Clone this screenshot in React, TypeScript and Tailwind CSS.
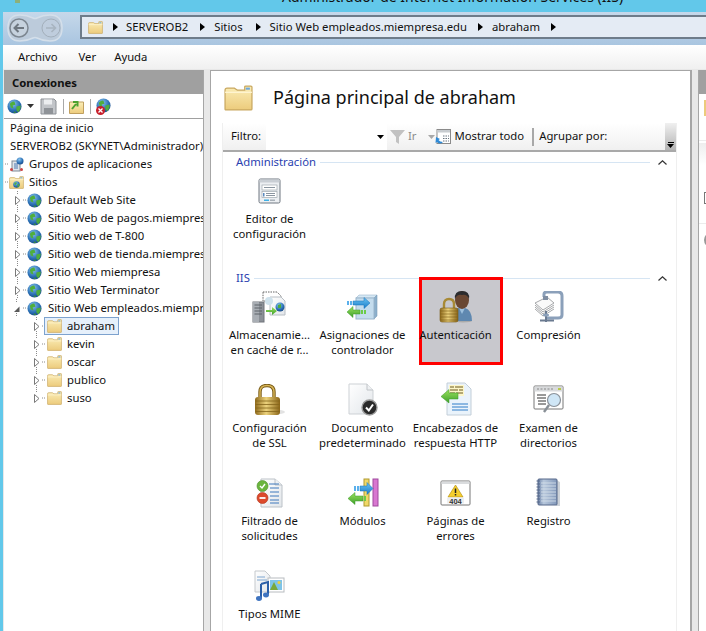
import type { ReactNode } from 'react';

const sites = [
  'Default Web Site',
  'Sitio Web de pagos.miempresa.edu',
  'Sitio web de T-800',
  'Sitio web de tienda.miempresa.edu',
  'Sitio Web miempresa',
  'Sitio Web Terminator',
];

const folders = ['abraham', 'kevin', 'oscar', 'publico', 'suso'];

function SharedDefs() {
  return (
    <svg className="absolute w-0 h-0">
      <defs>
        <linearGradient id="folderFill" x1="0" y1="0" x2="0" y2="1">
          <stop offset="0" stopColor="#fbeeb8" />
          <stop offset="1" stopColor="#eccb7c" />
        </linearGradient>
        <radialGradient id="globeFill" cx="0.4" cy="0.3" r="0.8">
          <stop offset="0" stopColor="#8ac4ee" />
          <stop offset="0.6" stopColor="#2a6fb4" />
          <stop offset="1" stopColor="#143f7c" />
        </radialGradient>
        <linearGradient id="goldFill" x1="0" y1="0" x2="1" y2="0">
          <stop offset="0" stopColor="#8f6a1c" />
          <stop offset="0.45" stopColor="#ecd27c" />
          <stop offset="1" stopColor="#8a6518" />
        </linearGradient>
        <linearGradient id="paperFill" x1="0" y1="0" x2="1" y2="1">
          <stop offset="0" stopColor="#ffffff" />
          <stop offset="1" stopColor="#e2e6ea" />
        </linearGradient>
        <linearGradient id="blueArrow" x1="0" y1="0" x2="0" y2="1">
          <stop offset="0" stopColor="#6ac4f4" />
          <stop offset="1" stopColor="#1c7cc8" />
        </linearGradient>
        <linearGradient id="greenArrow" x1="0" y1="0" x2="0" y2="1">
          <stop offset="0" stopColor="#9be25e" />
          <stop offset="1" stopColor="#3fa02c" />
        </linearGradient>
        <linearGradient id="notebook" x1="0" y1="0" x2="1" y2="0">
          <stop offset="0" stopColor="#6d83a8" />
          <stop offset="0.3" stopColor="#b8c8dc" />
          <stop offset="1" stopColor="#8298ba" />
        </linearGradient>
      </defs>
    </svg>
  );
}

function Folder({ w = 15, h = 14 }: { w?: number; h?: number }) {
  return (
    <svg width={w} height={h} viewBox="0 0 28 25" className="shrink-0" preserveAspectRatio="none">
      <path d="M1 5 Q1 3 3 3 L10 3 L13 5 L20 5 L20 2 Q20 1 21 1 L26 1 Q27 1 27 2 L27 23 Q27 24 26 24 L2 24 Q1 24 1 23 Z" fill="url(#folderFill)" stroke="#c9a860" strokeWidth="1.2" />
      <rect x="21" y="2.5" width="4" height="2" fill="#6da8dc" />
      <path d="M1 7 L27 7" stroke="#fff6d4" strokeWidth="1.2" />
    </svg>
  );
}

function Globe({ size = 15 }: { size?: number }) {
  return (
    <svg width={size} height={size} viewBox="0 0 16 16" className="shrink-0">
      <circle cx="8" cy="8" r="7.5" fill="url(#globeFill)" />
      <path d="M3 5 Q6 2 8 3 L9 6 L6 7 L7 10 L4 9 Z" fill="#4fae3c" />
      <path d="M10 8 L14.5 7 Q15 11 12 14 L10 12 Z" fill="#4fae3c" />
      <path d="M8 13 L10 14.5 L7 15 Z" fill="#3c962f" />
    </svg>
  );
}

function Arrow({ color = '#000' }: { color?: string }) {
  return (
    <svg width="5" height="8" viewBox="0 0 5 8" className="shrink-0">
      <path d="M0 0 L5 4 L0 8 Z" fill={color} />
    </svg>
  );
}

function DownCaret({ color = '#000' }: { color?: string }) {
  return (
    <svg width="7" height="4" viewBox="0 0 7 4" className="shrink-0">
      <path d="M0 0 L7 0 L3.5 4 Z" fill={color} />
    </svg>
  );
}

function Expander({ open = false, last = false }: { open?: boolean; last?: boolean }) {
  return (
    <svg width="6" height="18" viewBox="0 0 6 18" className="shrink-0">
      <path d="M2.5 0 V4" stroke="#8a8a8a" strokeDasharray="1 1" />
      {!last && <path d="M2.5 14 V18" stroke="#8a8a8a" strokeDasharray="1 1" />}
      {open ? (
        <path d="M0 13 L5.5 13 L5.5 7.5 Z" fill="#595959" />
      ) : (
        <path d="M0.5 5.5 L5 9.5 L0.5 13.5 Z" fill="#fff" stroke="#7a7a7a" />
      )}
    </svg>
  );
}

function Dots({ w }: { w: number }) {
  return (
    <svg width={w} height="2" className="shrink-0">
      <path d={`M0 1 H${w}`} stroke="#8a8a8a" strokeDasharray="1 1" />
    </svg>
  );
}

function BackButtons() {
  return (
    <svg width="56" height="28" viewBox="0 0 56 28" className="ml-[4px] -mt-[2px] shrink-0">
      <path d="M13 1 Q20 1 26 4 Q28 5 30 4 Q36 1 43 1 Q55 1 55 14 Q55 27 43 27 Q36 27 30 24 Q28 23 26 24 Q20 27 13 27 Q1 27 1 14 Q1 1 13 1 Z" fill="#bccbdb" stroke="#d4dfea" strokeWidth="1.5" />
      <circle cx="12" cy="14" r="9" fill="#c6d2de" stroke="#7d8791" strokeWidth="1.5" />
      <path d="M17 14 H8 M11.5 10 L7.5 14 L11.5 18" fill="none" stroke="#6e7780" strokeWidth="2" />
      <circle cx="44" cy="14" r="9" fill="#c0ceddb0" stroke="#a3afbb" strokeWidth="1" />
      <path d="M39 14 H48 M44.5 10 L48.5 14 L44.5 18" fill="none" stroke="#a8b4c0" strokeWidth="1.6" />
    </svg>
  );
}

function SmallIconToolbar() {
  return (
    <div className="h-[25px] shrink-0 flex items-center pl-[3px] border-b border-[#a0a0a0]">
      <Globe size={15} />
      <span className="ml-[5px] mr-[6px]"><DownCaret color="#333" /></span>
      <svg width="17" height="17" viewBox="0 0 17 17">
        <path d="M1 1 H14 L16 3 V16 H1 Z" fill="#c2c5c9" stroke="#8d9196" />
        <rect x="4" y="1.5" width="8" height="5" fill="#eceef0" />
        <rect x="4" y="10" width="9" height="6" fill="#8f9398" />
      </svg>
      <div className="w-px h-[15px] bg-[#a8a8a8] ml-[6px] mr-[5px]" />
      <svg width="15" height="15" viewBox="0 0 15 15">
        <path d="M0.5 3 H14.5 V14.5 H0.5 Z" fill="url(#folderFill)" stroke="#c0a060" />
        <path d="M3 10 L7 5 M4 3 H8.5 V7.5" fill="none" stroke="#4da22f" strokeWidth="2" />
      </svg>
      <div className="w-px h-[15px] bg-[#a8a8a8] ml-[6px] mr-[5px]" />
      <div className="relative w-[16px] h-[16px]">
        <Globe size={15} />
        <svg width="9" height="9" viewBox="0 0 9 9" className="absolute left-0 bottom-[-1px]">
          <circle cx="4.5" cy="4.5" r="4.5" fill="#c8202c" />
          <path d="M2.5 2.5 L6.5 6.5 M6.5 2.5 L2.5 6.5" stroke="#fff" strokeWidth="1.3" />
        </svg>
      </div>
    </div>
  );
}

function TreeRow({ children }: { children: ReactNode }) {
  return <div className="h-[18px] flex items-center whitespace-nowrap [&>*]:shrink-0">{children}</div>;
}

function Tree() {
  return (
    <div className="flex-1 overflow-hidden bg-white text-[#111]">
      <TreeRow><span className="pl-[6px]">Página de inicio</span></TreeRow>
      <TreeRow><span className="pl-[6px]">SERVEROB2 (SKYNET\Administrador)</span></TreeRow>
      <TreeRow>
        <span className="w-[1px]" />
        <Dots w={4} />
        <svg width="15" height="15" viewBox="0 0 15 15">
          <rect x="3" y="4" width="8" height="10" fill="#dfe4ea" stroke="#7f8a96" />
          <path d="M5 7 H9 M5 9 H9 M5 11 H9" stroke="#4a78b0" />
          <circle cx="11" cy="4" r="3.5" fill="url(#globeFill)" />
          <circle cx="2.5" cy="12.5" r="1.5" fill="#c44" />
          <circle cx="12.5" cy="12.5" r="1.5" fill="#c44" />
        </svg>
        <span className="ml-[5px]">Grupos de aplicaciones</span>
      </TreeRow>
      <TreeRow>
        <span className="w-[1px]" />
        <Dots w={4} />
        <div className="relative">
          <Folder w={15} h={13} />
          <div className="absolute left-[4px] top-[5px]"><Globe size={7} /></div>
        </div>
        <span className="ml-[5px]">Sitios</span>
      </TreeRow>
      {sites.map((site) => (
        <TreeRow key={site}>
          <span className="w-[11px]" />
          <Expander />
          <span className="w-[2px]" />
          <Dots w={4} />
          <Globe />
          <span className="ml-[6px]">{site}</span>
        </TreeRow>
      ))}
      <TreeRow>
        <span className="w-[10px]" />
        <Expander open />
        <span className="w-[3px]" />
        <Dots w={4} />
        <Globe />
        <span className="ml-[6px]">Sitio Web empleados.miempresa.edu</span>
      </TreeRow>
      {folders.map((name, i) => (
        <TreeRow key={name}>
          <span className="w-[30px]" />
          <Expander last={i === folders.length - 1} />
          <span className="w-[2px]" />
          <Dots w={3} />
          <div className={`flex items-center h-[18px] pl-[2px] pr-[3px] gap-[5px] -ml-px border ${i === 0 ? 'border-[#7da2ce] bg-[#e6f0fb]' : 'border-transparent'}`}>
            <Folder />
            <span>{name}</span>
          </div>
        </TreeRow>
      ))}
    </div>
  );
}

function SectionHeader({ title }: { title: string }) {
  return (
    <div className="h-4 flex items-center pl-[13px] pr-[9px]">
      <span className="text-[#2a3fb0]">{title}</span>
      <div className="flex-1 h-px bg-[#d6e5f3] ml-[4px]" />
      <svg width="9" height="5" viewBox="0 0 9 5" className="ml-[8px]">
        <path d="M0.5 4.5 L4.5 0.8 L8.5 4.5" fill="none" stroke="#333" strokeWidth="1.2" />
      </svg>
    </div>
  );
}

function Tile({ label, icon, selected = false }: { label: string; icon: ReactNode; selected?: boolean }) {
  return (
    <div className="relative h-[93px] flex flex-col items-center text-center text-[#111] leading-[15px]">
      {selected && <div className="absolute left-[10px] top-[-9px] w-[84px] h-[88px] bg-[#c8c8cd] border-[3px] border-[#ff0000]" />}
      <div className="relative h-[41px] w-full shrink-0 flex items-center justify-center py-[3px]">{icon}</div>
      <div className="relative w-full whitespace-pre-line">{label}</div>
    </div>
  );
}

const EditorIcon = (
  <svg width="23" height="26" viewBox="0 0 23 26">
    <rect x="1" y="1" width="21" height="24" rx="1.5" fill="#eceff2" stroke="#6f7780" />
    <rect x="1.5" y="1.5" width="20" height="3" fill="#c9ced4" />
    <rect x="4" y="7" width="15" height="5" fill="#fff" stroke="#a0a8b0" strokeWidth="0.7" />
    <path d="M6 9.5 H17" stroke="#8a95a0" />
    <rect x="4" y="13.5" width="15" height="6" fill="#fff" stroke="#a0a8b0" strokeWidth="0.7" />
    <path d="M8 15.5 H17 M8 17.5 H17" stroke="#8a95a0" />
    <rect x="5" y="15" width="1.5" height="3.5" fill="#5a8ac0" />
    <rect x="6" y="21.5" width="5" height="1.5" fill="#3fb0e6" />
    <rect x="12" y="21.5" width="5" height="1.5" fill="#a8b0b8" />
  </svg>
);

const CacheIcon = (
  <svg width="35" height="32" viewBox="0 0 35 32">
    <path d="M11 1 H25 L29 5 V10 H11 Z" fill="#fff" stroke="#666" strokeDasharray="1.5 1" />
    <path d="M18 6 H29 L33 10 V24 H18 Z" fill="url(#paperFill)" stroke="#b8bec4" />
    <rect x="1" y="11" width="11" height="20" fill="#8b9097" stroke="#70757b" />
    <rect x="1" y="11" width="6" height="20" fill="#a9aeb4" />
    <path d="M2.5 14 H10 M2.5 17 H10 M2.5 20 H10 M2.5 23 H10" stroke="#5d6268" />
    <circle cx="28" cy="16" r="4.5" fill="url(#globeFill)" />
    <path d="M26 14 L29 13 L29 17 L26 17 Z" fill="#4fae3c" />
    <circle cx="17" cy="10" r="4" fill="#cfe2ec" />
    <path d="M14 19 H20 V16 L25 20 L20 24 V21 H14 Z" fill="url(#greenArrow)" />
  </svg>
);

const HandlerIcon = (
  <svg width="33" height="26" viewBox="0 0 33 26">
    <path d="M10 4 L13 1 H31 L28 4 Z" fill="#d6e8f4" stroke="#9bb6cc" strokeWidth="0.6" />
    <path d="M28 4 L31 1 V22 L28 25 Z" fill="#8cb0cc" stroke="#7e9fba" strokeWidth="0.6" />
    <rect x="10" y="4" width="18" height="21" fill="#c4dced" stroke="#9bb6cc" />
    <path d="M1 7 H3 V11 H1 Z M4 7 H6 V11 H4 Z" fill="#5ab0ec" />
    <path d="M7 7 H18 V3.5 L24 9 L18 14.5 V11 H7 Z" fill="url(#blueArrow)" stroke="#1770b8" strokeWidth="0.5" />
    <path d="M20 16 H18 V20 H20 Z M17 16 H15 V20 H17 Z" fill="#6ccc48" />
    <path d="M14 16 H7 V12.5 L1 18 L7 23.5 V20 H14 Z" fill="url(#greenArrow)" stroke="#3a9a28" strokeWidth="0.5" />
  </svg>
);

const AuthIcon = (
  <svg width="34" height="33" viewBox="0 0 34 33">
    <ellipse cx="24" cy="31" rx="9" ry="1.5" fill="#aaa" />
    <path d="M12 31 Q11 20 19 18 H26 Q33 20 33 31 Z" fill="#5f88b0" />
    <path d="M20 18 L23 24 L26 18 Z" fill="#9cbfdd" />
    <ellipse cx="23" cy="10" rx="7" ry="9" fill="#6a4732" />
    <path d="M16 9 Q15 1 23 1 Q31 1 30 9 Q28 4 23 5 Q18 4 16 9 Z" fill="#2c2c2e" />
    <path d="M5 19 V14 Q5 9 10 9 Q15 9 15 14 V19" fill="none" stroke="#a88a36" strokeWidth="2.4" />
    <rect x="1" y="18" width="18" height="14" rx="2" fill="url(#goldFill)" stroke="#7a5c14" strokeWidth="0.6" />
    <path d="M1.5 21 H18.5 M1.5 24 H18.5 M1.5 27 H18.5 M1.5 30 H18.5" stroke="#7a5c14" strokeWidth="0.6" />
  </svg>
);

const CompressIcon = (
  <svg width="30" height="32" viewBox="0 0 30 32">
    <path d="M1 12 L13 6 L20 12 L9 19 Z" fill="#fafafa" stroke="#a6a8aa" />
    <path d="M1 14 L9 21 L20 14 M1 16 L9 23 L20 16 M1 18 L9 25 L20 18" fill="none" stroke="#a6a8aa" />
    <path d="M10 6 V3 Q10 1 13 1 H24 Q28 1 28 5 V24 Q28 27 24 27 H13" fill="none" stroke="#8ba0ba" strokeWidth="3" />
    <rect x="9" y="5" width="5" height="4" fill="#7f8ea2" />
    <path d="M12 20 V31 M6 29.5 H20" stroke="#6a7a90" strokeWidth="2" />
    <ellipse cx="12" cy="24" rx="3" ry="1.5" fill="#8ba0ba" />
  </svg>
);

const LockIcon = (
  <svg width="32" height="32" viewBox="0 0 32 32">
    <ellipse cx="20" cy="28" rx="11" ry="2.5" fill="#e2e2e2" />
    <path d="M6 14 V8 Q6 1.5 13 1.5 Q20 1.5 20 8 V14" fill="none" stroke="#7a5c18" strokeWidth="3.4" />
    <path d="M6 14 V8 Q6 1.5 13 1.5 Q20 1.5 20 8 V14" fill="none" stroke="#d8b658" strokeWidth="1.4" />
    <rect x="1" y="13" width="25" height="18" rx="3" fill="url(#goldFill)" />
    <path d="M1.5 17 H25.5 M1.5 20.5 H25.5 M1.5 24 H25.5 M1.5 27.5 H25.5" stroke="#84641a" strokeWidth="0.8" />
  </svg>
);

const DocumentIcon = (
  <svg width="30" height="33" viewBox="0 0 30 33">
    <path d="M1 1 H19 L25 7 V31 H1 Z" fill="url(#paperFill)" stroke="#cdd1d5" />
    <path d="M19 1 V7 H25" fill="#eef0f2" stroke="#c0c4c8" />
    <circle cx="21.5" cy="24.5" r="7.5" fill="#2a2a2a" stroke="#9a9a9a" strokeWidth="1.4" />
    <path d="M18 24.5 L20.8 27.5 L25 21.5" fill="none" stroke="#fff" strokeWidth="2" />
  </svg>
);

const HeadersIcon = (
  <svg width="32" height="35" viewBox="0 0 32 35">
    <path d="M7 1 H25 L31 7 V33 H7 Z" fill="#eaf3fb" stroke="#c3ced8" />
    <rect x="9" y="3" width="15" height="11" fill="#fdf6c8" />
    <path d="M10 5 H14 M15 5 H23 M10 8 H18 M19 8 H23 M10 11 H15 M16 11 H23" stroke="#6a5a20" />
    <path d="M12 22 H28 M12 25 H28 M12 28 H28" stroke="#2e7cc8" />
    <path d="M18 11 H9 V7.5 L1 14.5 L9 21 V17 H18 Z" fill="url(#greenArrow)" stroke="#3a9a28" strokeWidth="0.5" />
  </svg>
);

const BrowseIcon = (
  <svg width="31" height="29" viewBox="0 0 31 29">
    <rect x="1" y="1" width="29" height="23" rx="1" fill="#fff" stroke="#777" />
    <rect x="1.5" y="1.5" width="28" height="5" fill="#d8dadc" />
    <path d="M4 4 H20" stroke="#888" strokeDasharray="2 1.5" />
    <rect x="25" y="3" width="3" height="2" fill="#b7c94c" />
    <path d="M4 10 H13 M4 13 H13 M5 16 H13 M5 19 H13" stroke="#333" />
    <circle cx="21" cy="15" r="6.5" fill="#cfe6f6" stroke="#8a9199" strokeWidth="1.2" />
    <path d="M16 20 L11 27" stroke="#888f96" strokeWidth="2.4" />
  </svg>
);

const FilterIcon = (
  <svg width="27" height="30" viewBox="0 0 27 30">
    <path d="M5 1 H19 L26 7 V29 H5 Z" fill="url(#paperFill)" stroke="#bcc2c8" />
    <path d="M19 1 V7 H26" fill="#eef1f4" stroke="#bcc2c8" />
    <path d="M13 6 H23 M14 10 H23 M14 14 H23 M14 18 H23 M14 22 H23 M14 25 H23" stroke="#3f78bc" />
    <circle cx="6.5" cy="8" r="5.5" fill="#6bb53e" stroke="#4b8f2a" strokeWidth="0.6" />
    <path d="M4 8 L6 10 L9 6" fill="none" stroke="#fff" strokeWidth="1.4" />
    <circle cx="6.5" cy="20" r="5.5" fill="#dc4a2c" stroke="#b03218" strokeWidth="0.6" />
    <path d="M3.5 20 H9.5" stroke="#fff" strokeWidth="1.8" />
  </svg>
);

const ModulesIcon = (
  <svg width="32" height="29" viewBox="0 0 32 29">
    <rect x="17" y="1" width="5" height="27" fill="#f0d868" stroke="#b09a30" />
    <rect x="26" y="1" width="5" height="27" fill="#d877d0" stroke="#a04a9e" />
    <path d="M7 8 H9 V13 H7 Z M10 8 H12 V13 H10 Z" fill="#5ab0ec" />
    <path d="M13 8 H20 V4.5 L26 10.5 L20 16.5 V13 H13 Z" fill="url(#blueArrow)" stroke="#1770b8" strokeWidth="0.5" />
    <path d="M16 18 H8 V14.5 L1 20.5 L8 26.5 V23 H16 Z" fill="url(#greenArrow)" stroke="#3a9a28" strokeWidth="0.5" />
    <path d="M17 18 H19 V23 H17 Z" fill="#6ccc48" />
  </svg>
);

const ErrorsIcon = (
  <svg width="31" height="26" viewBox="0 0 31 26">
    <rect x="1" y="1" width="29" height="24" rx="1" fill="#fff" stroke="#777" />
    <rect x="1.5" y="1.5" width="28" height="2.5" fill="#dadcde" />
    <path d="M15.5 5 L23 17 H8 Z" fill="#f6cf2e" stroke="#b89418" strokeWidth="0.7" />
    <path d="M15.5 8.5 V13 M15.5 14 V15.5" stroke="#222" strokeWidth="1.5" />
    <rect x="7" y="17.5" width="17" height="6" fill="#eceef0" />
    <text x="15.5" y="23.5" textAnchor="middle" fontSize="7.5" fontWeight="700" fill="#333" fontFamily="'Liberation Sans', sans-serif">404</text>
  </svg>
);

const LogIcon = (
  <svg width="25" height="31" viewBox="0 0 25 31">
    <path d="M20 3 L24 5 V29 L20 29 Z" fill="#cdd2d8" />
    <rect x="2" y="2" width="19" height="26" rx="1" fill="url(#notebook)" stroke="#56688a" />
    <path d="M5 6 H20 M5 9 H20 M5 12 H20 M5 15 H20 M5 18 H20 M5 21 H20 M5 24 H20" stroke="#dbe4ee" strokeWidth="0.8" />
    <path d="M0.5 4 H4 M0.5 7 H4 M0.5 10 H4 M0.5 13 H4 M0.5 16 H4 M0.5 19 H4 M0.5 22 H4 M0.5 25 H4" stroke="#56688a" />
  </svg>
);

const MimeIcon = (
  <svg width="31" height="32" viewBox="0 0 31 32">
    <path d="M1 1 H11 L16 6 V22 H1 Z" fill="url(#paperFill)" stroke="#c4c8cc" />
    <path d="M3 7 H11 M3 10 H13" stroke="#7fa6d0" />
    <rect x="14" y="8" width="16" height="14" fill="#fff" stroke="#b8bcc0" />
    <rect x="16" y="10" width="12" height="10" fill="#7ec4e8" />
    <path d="M16 20 L20 12 L24 20 Z" fill="#7aa83a" />
    <circle cx="25" cy="12.5" r="1.5" fill="#f0d040" />
    <path d="M7 14 L14 12 V24 M7 14 V28" fill="none" stroke="#2a5ea8" strokeWidth="2" />
    <ellipse cx="5" cy="28.5" rx="3" ry="2.4" fill="#3f74c0" />
    <ellipse cx="12" cy="25" rx="3" ry="2.4" fill="#3f74c0" />
  </svg>
);

const iisTiles: { label: string; icon: ReactNode; selected?: boolean }[] = [
  { label: 'Almacenamie...\nen caché de r...', icon: CacheIcon },
  { label: 'Asignaciones de\ncontrolador', icon: HandlerIcon },
  { label: 'Autenticación', icon: AuthIcon, selected: true },
  { label: 'Compresión', icon: CompressIcon },
  { label: 'Configuración\nde SSL', icon: LockIcon },
  { label: 'Documento\npredeterminado', icon: DocumentIcon },
  { label: 'Encabezados de\nrespuesta HTTP', icon: HeadersIcon },
  { label: 'Examen de\ndirectorios', icon: BrowseIcon },
  { label: 'Filtrado de\nsolicitudes', icon: FilterIcon },
  { label: 'Módulos', icon: ModulesIcon },
  { label: 'Páginas de\nerrores', icon: ErrorsIcon },
  { label: 'Registro', icon: LogIcon },
  { label: 'Tipos MIME', icon: MimeIcon },
];

function FilterBar() {
  return (
    <div className="h-[29px] shrink-0 flex items-center bg-gradient-to-b from-white to-[#f0f0f0] border-b-2 border-[#a9a9a9] text-[#111]">
      <span className="pl-2 w-[43px]">Filtro:</span>
      <div className="w-[121px] h-[27px] bg-white flex items-center justify-end pr-[3px]">
        <DownCaret />
      </div>
      <svg width="15" height="14" viewBox="0 0 15 14" className="ml-[3px]">
        <path d="M0 0 H15 L9 7 V14 L6 12 V7 Z" fill="#c2c2c2" />
      </svg>
      <span className="ml-[3px] text-[#8c8c8c]">Ir</span>
      <span className="ml-[11px]"><DownCaret color="#a8a8a8" /></span>
      <svg width="16" height="16" viewBox="0 0 16 16">
        <rect x="2" y="0.5" width="13.5" height="14" fill="#fff" stroke="#8a8a8a" />
        <rect x="2.5" y="1" width="12.5" height="2.5" fill="#c8ccd0" />
        <path d="M8 7 H14 M8 9.5 H14 M8 12 H14" stroke="#6a7580" strokeDasharray="1.5 1" />
        <path d="M1 8 L5 10 L3.5 11 Q5 13 8 13 Q5 16 2 13 L0.5 14 Z" fill="#2f8ad6" />
      </svg>
      <span className="ml-[4px]">Mostrar todo</span>
      <div className="w-[2px] h-[18px] bg-[#a8a8a8] ml-[8px]" />
      <span className="ml-[5px]">Agrupar por:</span>
      <div className="ml-auto w-[11px] h-full bg-gradient-to-b from-[#f0f0f0] to-[#b4b4b4] flex flex-col items-center justify-end pb-[2px]">
        <div className="w-[6px] h-px bg-black mb-px" />
        <DownCaret />
      </div>
    </div>
  );
}

function CenterPanel() {
  return (
    <div className="w-[482px] shrink-0 bg-white border-t border-l border-r-2 border-[#a6a6a6] flex flex-col pl-[11px] pr-[13px] overflow-hidden">
      <div className="h-[52px] shrink-0 flex items-center pl-[2px] pt-[1px]">
        <Folder w={29} h={26} />
        <span className="ml-[20px] text-[18px] text-[#111]">Página principal de abraham</span>
      </div>
      <div className="flex-1 flex flex-col border-l border-r border-[#efefef]">
        <FilterBar />
        <div className="pt-[2px]">
          <SectionHeader title="Administración" />
          <div className="grid grid-cols-[repeat(4,93px)] mb-[7px]">
            <Tile label={'Editor de\nconfiguración'} icon={EditorIcon} />
          </div>
          <SectionHeader title="IIS" />
          <div className="grid grid-cols-[repeat(4,93px)]">
            {iisTiles.map((tile) => (
              <Tile key={tile.label} {...tile} />
            ))}
          </div>
        </div>
      </div>
    </div>
  );
}

function RightPanel() {
  return (
    <div className="flex-1 bg-white border-l border-[#a6a6a6] flex flex-col overflow-hidden">
      <div className="h-6 bg-[#a0a0a0] shrink-0" />
      <div className="w-[3px] h-[16px] bg-[#eccb7c] ml-[5px] mt-[6px]" />
      <div className="h-px bg-[#ececec] mt-[24px]" />
      <div className="h-[22px] bg-gradient-to-b from-[#eeeeee] to-white mt-[2px]" />
      <div className="w-[8px] h-[12px] border border-[#777] ml-[5px] mt-[27px]" />
      <div className="h-px bg-[#ececec] mt-[19px]" />
      <div className="w-[8px] h-[16px] border-l-2 border-[#999] rounded-l-full ml-[5px] mt-[8px]" />
    </div>
  );
}

export default function App() {
  return (
    <div className="w-[706px] h-[631px] overflow-hidden bg-[#62c8ea] pl-[3px] flex flex-col text-[11.3px] font-['Noto_Sans','Open_Sans',sans-serif]">
      <SharedDefs />
      <div className="h-3 shrink-0 overflow-hidden relative">
        <div className="w-[5px] h-[3px] bg-[#8cb07a] ml-[12px]" />
        <div className="absolute left-[279px] top-[-14px] text-[14px] text-[#111] whitespace-nowrap">Administrador de Internet Information Services (IIS)</div>
      </div>
      <div className="h-[33px] shrink-0 flex items-center bg-gradient-to-b from-[#c6d8ea] to-[#a9c5e0]">
        <BackButtons />
        <div className="ml-[17px] flex-1 h-6 -mt-[3px] bg-[#e4ebf4] border-y-2 border-l-2 border-[#6e7c8a] flex items-center pl-[6px] text-[#111] whitespace-nowrap">
          <Folder w={15} h={13} />
          <span className="ml-[10px]"><Arrow /></span>
          <span className="ml-[8px]">SERVEROB2</span>
          <span className="ml-[12px]"><Arrow /></span>
          <span className="ml-[9px]">Sitios</span>
          <span className="ml-[13px]"><Arrow /></span>
          <span className="ml-[9px]">Sitio Web empleados.miempresa.edu</span>
          <span className="ml-[11px]"><Arrow /></span>
          <span className="ml-[9px]">abraham</span>
          <span className="ml-[11px]"><Arrow /></span>
        </div>
      </div>
      <div className="h-[24px] shrink-0 flex items-center bg-gradient-to-b from-white to-[#f0f0f0] pl-[15px] text-[#111]">
        <span className="mr-[21px]">Archivo</span>
        <span className="mr-[18px]">Ver</span>
        <span>Ayuda</span>
      </div>
      <div className="flex-1 flex bg-[#e8e8e8] pl-px pt-px min-h-0">
        <div className="w-[200px] shrink-0 flex flex-col bg-white border-r border-[#a6a6a6] overflow-hidden">
          <div className="h-6 shrink-0 bg-[#a0a0a0] flex items-center pl-2 pt-[2px] font-bold text-[#111]">Conexiones</div>
          <SmallIconToolbar />
          <Tree />
        </div>
        <div className="w-[6px] shrink-0" />
        <CenterPanel />
        <div className="w-[6px] shrink-0" />
        <RightPanel />
      </div>
    </div>
  );
}
